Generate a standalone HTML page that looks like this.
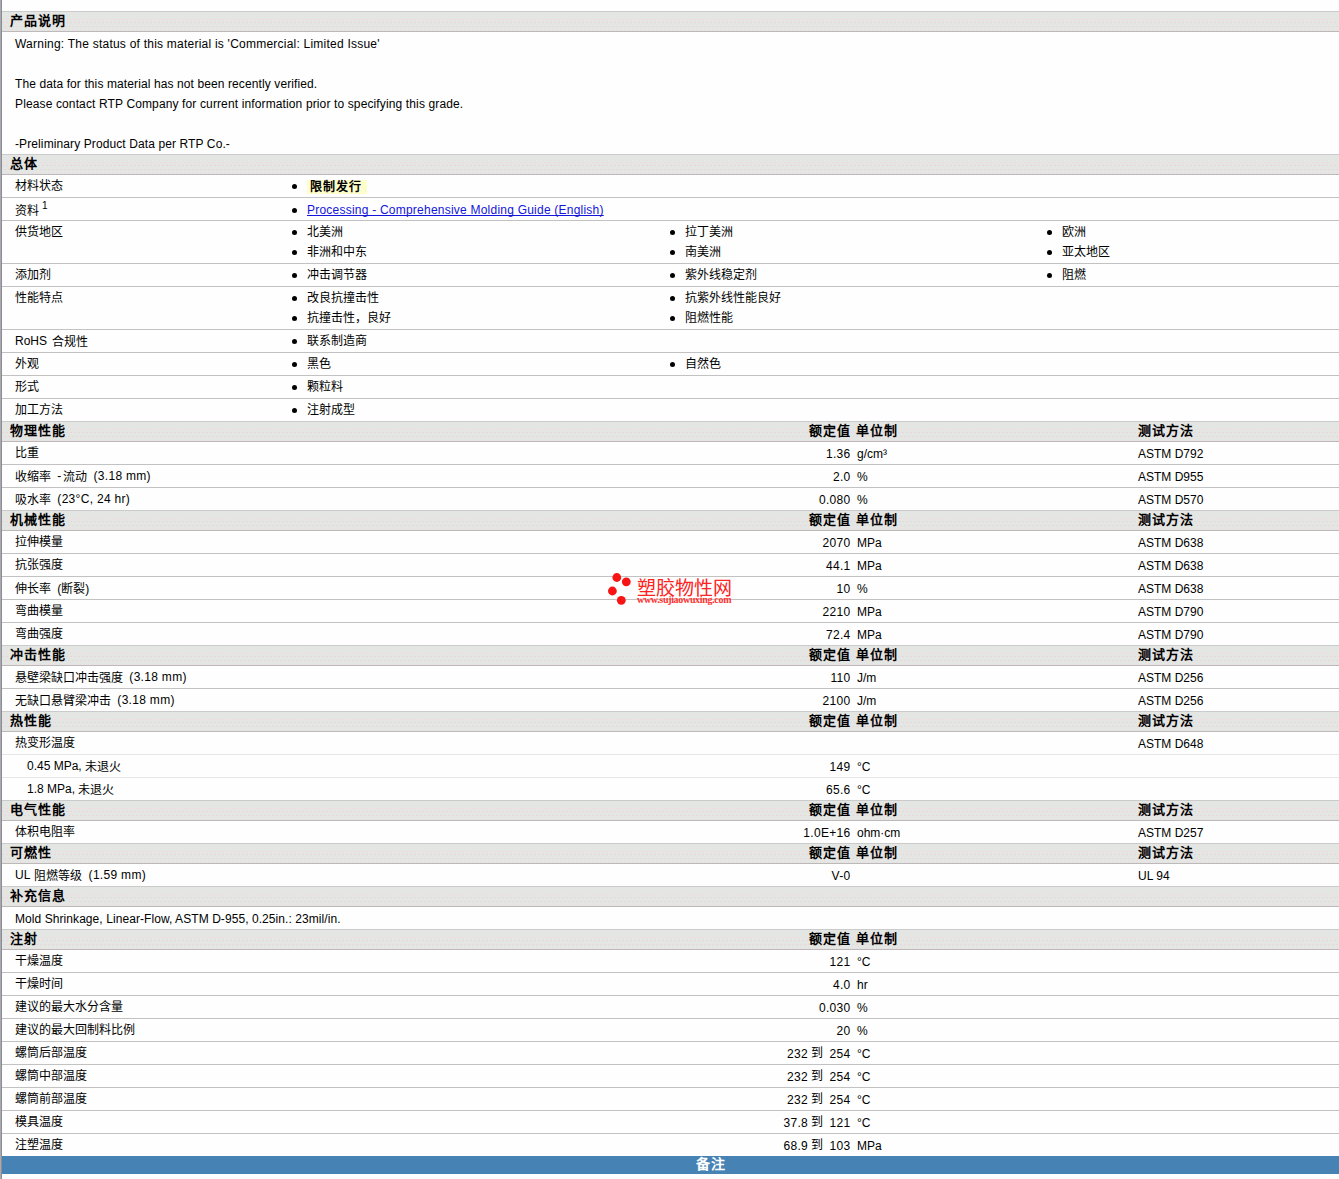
<!DOCTYPE html>
<html lang="zh-CN">
<head>
<meta charset="utf-8">
<title>RTP datasheet</title>
<style>
html,body{margin:0;padding:0;background:#fdfefd;}
body{font-family:"Liberation Sans",sans-serif;font-size:12px;color:#000;}
#p{position:relative;width:1339px;height:1179px;overflow:hidden;background:#fdfefd;}
#lb{position:absolute;left:0;top:0;width:1px;height:1179px;background:#a9a9b0;border-right:1px solid #8c8c94;z-index:5;}
.top{height:11px;border-bottom:1px solid #cbcbcb;}
.h{position:relative;height:19px;line-height:19px;background:linear-gradient(90deg,#fbd3dd 1px,transparent 1px) 1px 7px/3px 1px repeat-x,linear-gradient(90deg,#fbd3dd 1px,#d9dbd9 1px,#d9dbd9 2px,transparent 2px) 2px 10px/4px 1px repeat-x,linear-gradient(90deg,#fbd3dd 1px,#d9dbd9 1px,#d9dbd9 2px,transparent 2px) 0 14px/4px 1px repeat-x,linear-gradient(90deg,#fbd3dd 1px,transparent 1px) 0 18px/4px 1px repeat-x,#e4e6e4;border-bottom:1px solid #bababa;font-weight:bold;font-size:13px;letter-spacing:1px;white-space:nowrap;}
.r{position:relative;height:22px;line-height:22px;border-bottom:1px solid #c2c2c2;white-space:nowrap;}
.r.lt{border-bottom-color:#e6e6e6;}
.r.hl{border-bottom-color:#cbcbcb;}
.r.nb{border-bottom:none;}
.r2{height:42px;}
.h span,.r span,.r a{position:absolute;top:0;}
.h span{top:-1px;}
.r span.v,.r span.u,.r span.t,.r span.la,.r span.m,.r a{top:1px;}
i{font-style:normal;position:relative;}
i.e{top:-1px;margin-left:3px;letter-spacing:.3px;}
i.e0{top:-1px;}
i.c{top:-1px;}
i.g{display:inline-block;width:3px;}
.hn{left:10px;}
.hv{right:488px;}
.hu{left:856px;}
.ht{left:1138px;}
.l,.la{left:15px;}
.l.in{left:27px;}
.v{right:488.5px;letter-spacing:.3px;}
.u{left:857px;}
.t{left:1138px;}
.b1,.b2,.b3{width:5px;height:5px;border-radius:50%;background:#000;}
.r span.b1,.r span.b2,.r span.b3{top:9px;}
.r span.b1.s2,.r span.b2.s2,.r span.b3.s2{top:29px;}
.b1{left:292px;}.b2{left:670px;}.b3{left:1047px;}
.c1{left:307px;}.c2{left:685px;}.c3{left:1062px;}
.r span.s2{top:20px;}
.desc{position:relative;height:123px;border-bottom:1px solid #cbcbcb;padding-left:15px;line-height:20px;white-space:nowrap;box-sizing:border-box;padding-top:1px;}
.desc div{height:20px;position:relative;top:1px;}
a{color:#1414dc;text-decoration:underline;text-decoration-skip-ink:none;text-underline-offset:1px;letter-spacing:.225px;}
.lim{font-weight:bold;background:#ffffcc;padding:0 5px 0 3px;letter-spacing:1px;line-height:14px;display:inline-block;height:14px;vertical-align:top;margin-top:5px;}
sup.s{position:absolute;left:27px;top:1px;font-size:10px;line-height:10px;}
#note{position:relative;height:18px;line-height:18px;background:#4682b4;color:#fff;font-weight:bold;font-size:14px;letter-spacing:1px;}
#note span{position:absolute;left:696px;top:-1px;}
#wm{position:absolute;left:0;top:0;z-index:4;}
.wmc{position:absolute;left:637px;top:576px;font-size:19px;line-height:26px;color:#f22;font-weight:300;white-space:nowrap;letter-spacing:0px;}
.wmu{position:absolute;left:637px;top:594px;font-family:"Liberation Serif",serif;font-weight:bold;font-size:10px;line-height:12px;color:#f33;white-space:nowrap;letter-spacing:-.32px;}
</style>
</head>
<body>
<div id="p">
<div id="lb"></div>
<div class="top"></div>
<div class="h"><span class="hn">产品说明</span></div>
<div class="desc"><div style="letter-spacing:.23px">Warning: The status of this material is 'Commercial: Limited Issue'</div><div></div><div style="letter-spacing:.105px">The data for this material has not been recently verified.</div><div style="letter-spacing:.128px">Please contact RTP Company for current information prior to specifying this grade.</div><div></div><div style="letter-spacing:.105px">-Preliminary Product Data per RTP Co.-</div></div>
<div class="h"><span class="hn">总体</span></div>
<div class="r"><span class="l">材料状态</span><span class="b1"></span><span class="c1"><b class="lim">限制发行</b></span></div>
<div class="r"><span class="l" style="top:2px">资料<sup class="s">1</sup></span><span class="b1" style="top:10px"></span><a class="c1">Processing - Comprehensive Molding Guide (English)</a></div>
<div class="r r2"><span class="l">供货地区</span><span class="b1"></span><span class="c1">北美洲</span><span class="b2"></span><span class="c2">拉丁美洲</span><span class="b3"></span><span class="c3">欧洲</span><span class="b1 s2"></span><span class="c1 s2">非洲和中东</span><span class="b2 s2"></span><span class="c2 s2">南美洲</span><span class="b3 s2"></span><span class="c3 s2">亚太地区</span></div>
<div class="r"><span class="l">添加剂</span><span class="b1"></span><span class="c1">冲击调节器</span><span class="b2"></span><span class="c2">紫外线稳定剂</span><span class="b3"></span><span class="c3">阻燃</span></div>
<div class="r r2"><span class="l">性能特点</span><span class="b1"></span><span class="c1">改良抗撞击性</span><span class="b2"></span><span class="c2">抗紫外线性能良好</span><span class="b1 s2"></span><span class="c1 s2">抗撞击性，良好</span><span class="b2 s2"></span><span class="c2 s2">阻燃性能</span></div>
<div class="r"><span class="l m"><i class="e0">RoHS</i> <i class="g" style="width:1.5px"></i>合规性</span><span class="b1"></span><span class="c1">联系制造商</span></div>
<div class="r"><span class="l">外观</span><span class="b1"></span><span class="c1">黑色</span><span class="b2"></span><span class="c2">自然色</span></div>
<div class="r"><span class="l">形式</span><span class="b1"></span><span class="c1">颗粒料</span></div>
<div class="r hl"><span class="l">加工方法</span><span class="b1"></span><span class="c1">注射成型</span></div>
<div class="h"><span class="hn">物理性能</span><span class="hv">额定值</span><span class="hu">单位制</span><span class="ht">测试方法</span></div>
<div class="r"><span class="l">比重</span><span class="v">1.36</span><span class="u">g/cm³</span><span class="t">ASTM D792</span></div>
<div class="r"><span class="l m">收缩率 <i class="g"></i><i class="e0" style="margin-right:-1.5px">-</i> 流动 <i class="e">(3.18 mm)</i></span><span class="v">2.0</span><span class="u">%</span><span class="t">ASTM D955</span></div>
<div class="r hl"><span class="l m">吸水率 <i class="e">(23°C, 24 hr)</i></span><span class="v">0.080</span><span class="u">%</span><span class="t">ASTM D570</span></div>
<div class="h"><span class="hn">机械性能</span><span class="hv">额定值</span><span class="hu">单位制</span><span class="ht">测试方法</span></div>
<div class="r"><span class="l">拉伸模量</span><span class="v">2070</span><span class="u">MPa</span><span class="t">ASTM D638</span></div>
<div class="r"><span class="l">抗张强度</span><span class="v">44.1</span><span class="u">MPa</span><span class="t">ASTM D638</span></div>
<div class="r"><span class="l m">伸长率 <i class="g"></i>(断裂)</span><span class="v">10</span><span class="u">%</span><span class="t">ASTM D638</span></div>
<div class="r"><span class="l">弯曲模量</span><span class="v">2210</span><span class="u">MPa</span><span class="t">ASTM D790</span></div>
<div class="r hl"><span class="l">弯曲强度</span><span class="v">72.4</span><span class="u">MPa</span><span class="t">ASTM D790</span></div>
<div class="h"><span class="hn">冲击性能</span><span class="hv">额定值</span><span class="hu">单位制</span><span class="ht">测试方法</span></div>
<div class="r"><span class="l m">悬壁梁缺口冲击强度 <i class="e">(3.18 mm)</i></span><span class="v">110</span><span class="u">J/m</span><span class="t">ASTM D256</span></div>
<div class="r hl"><span class="l m">无缺口悬臂梁冲击 <i class="e">(3.18 mm)</i></span><span class="v">2100</span><span class="u">J/m</span><span class="t">ASTM D256</span></div>
<div class="h"><span class="hn">热性能</span><span class="hv">额定值</span><span class="hu">单位制</span><span class="ht">测试方法</span></div>
<div class="r lt"><span class="l">热变形温度</span><span class="t">ASTM D648</span></div>
<div class="r lt"><span class="l in m"><i class="e0">0.45 MPa, </i>未退火</span><span class="v">149</span><span class="u">°C</span></div>
<div class="r hl"><span class="l in m"><i class="e0">1.8 MPa, </i>未退火</span><span class="v">65.6</span><span class="u">°C</span></div>
<div class="h"><span class="hn">电气性能</span><span class="hv">额定值</span><span class="hu">单位制</span><span class="ht">测试方法</span></div>
<div class="r hl"><span class="l">体积电阻率</span><span class="v">1.0E+16</span><span class="u">ohm·cm</span><span class="t">ASTM D257</span></div>
<div class="h"><span class="hn">可燃性</span><span class="hv">额定值</span><span class="hu">单位制</span><span class="ht">测试方法</span></div>
<div class="r hl"><span class="l m"><i class="e0">UL</i> <i class="g" style="width:1px"></i>阻燃等级 <i class="e">(1.59 mm)</i></span><span class="v">V-0</span><span class="t">UL 94</span></div>
<div class="h"><span class="hn">补充信息</span></div>
<div class="r hl"><span class="la"><i style="letter-spacing:.07px">Mold Shrinkage, Linear-Flow, ASTM D-955, 0.25in.: 23mil/in.</i></span></div>
<div class="h"><span class="hn">注射</span><span class="hv">额定值</span><span class="hu">单位制</span></div>
<div class="r"><span class="l">干燥温度</span><span class="v">121</span><span class="u">°C</span></div>
<div class="r"><span class="l">干燥时间</span><span class="v">4.0</span><span class="u">hr</span></div>
<div class="r"><span class="l">建议的最大水分含量</span><span class="v">0.030</span><span class="u">%</span></div>
<div class="r"><span class="l">建议的最大回制料比例</span><span class="v">20</span><span class="u">%</span></div>
<div class="r"><span class="l">螺筒后部温度</span><span class="v">232<i class="c" style="margin:0 2.8px 0 2.8px">到</i> 254</span><span class="u">°C</span></div>
<div class="r"><span class="l">螺筒中部温度</span><span class="v">232<i class="c" style="margin:0 2.8px 0 2.8px">到</i> 254</span><span class="u">°C</span></div>
<div class="r"><span class="l">螺筒前部温度</span><span class="v">232<i class="c" style="margin:0 2.8px 0 2.8px">到</i> 254</span><span class="u">°C</span></div>
<div class="r"><span class="l">模具温度</span><span class="v">37.8<i class="c" style="margin:0 2.8px 0 2.8px">到</i> 121</span><span class="u">°C</span></div>
<div class="r nb"><span class="l">注塑温度</span><span class="v">68.9<i class="c" style="margin:0 2.8px 0 2.8px">到</i> 103</span><span class="u">MPa</span></div>
<div id="note"><span>备注</span></div>
<div id="wm"><svg width="1339" height="1179" style="position:absolute;left:0;top:0"><g fill="#f81414"><circle cx="616.8" cy="577.5" r="4.4"/><circle cx="626.3" cy="581.8" r="4.4"/><circle cx="612.4" cy="591" r="4.4"/><circle cx="621.3" cy="600.3" r="4.4"/></g></svg><div class="wmc">塑胶物性网</div><div class="wmu">www.sujiaowuxing.com</div></div>
</div>
</body>
</html>
